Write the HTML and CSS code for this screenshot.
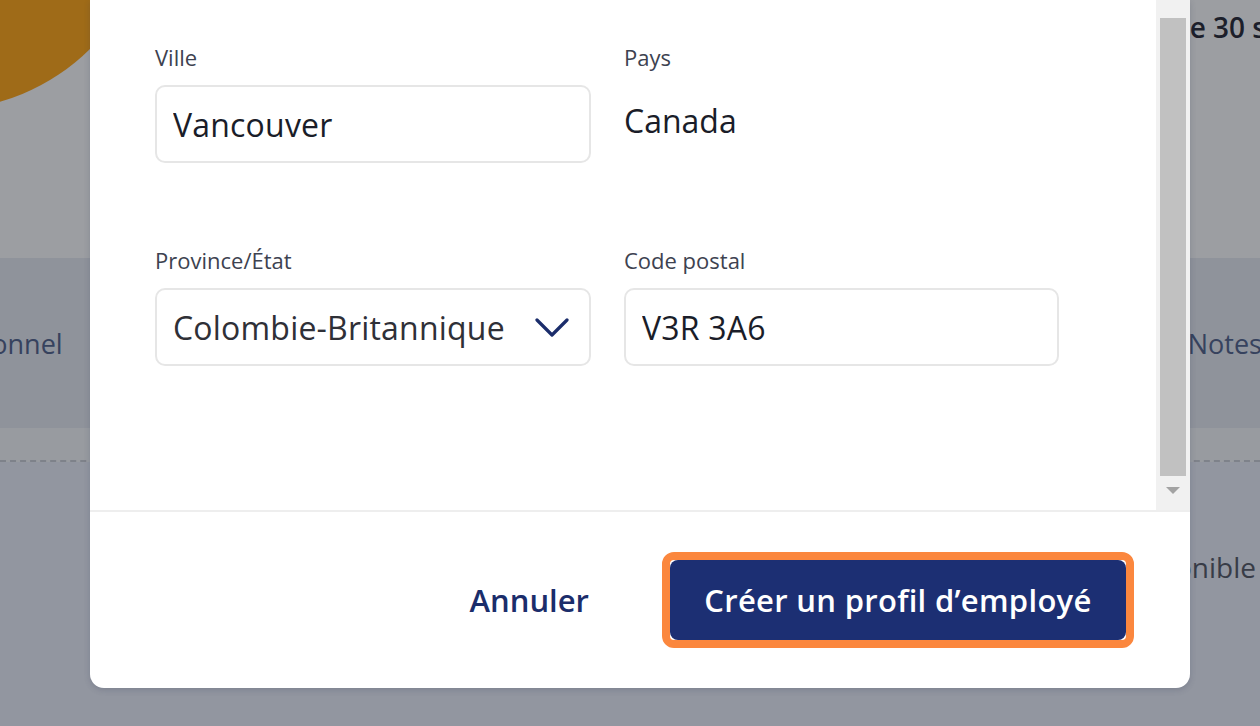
FILE: index.html
```html
<!DOCTYPE html>
<html lang="fr">

<head>
  <meta charset="UTF-8">
  <meta name="viewport" content="width=device-width, initial-scale=1.0">
  <title>Créer un profil d'employé</title>

  <link rel="stylesheet" href="styles.css">
</head>

<body>
  <div id="page">
    <div class="pageHead">
      <div class="avatar"></div>
      <p class="trial">Essai de 30 s</p>
    </div>
    <ul class="tabs">
      <li class="tabFirst">Personnel</li>
      <li class="tabLast">Notes</li>
    </ul>
    <div class="strip"></div>
    <div class="section">
      <p class="status">Disponible</p>
    </div>
  </div>

  <div id="modal">
    <div class="modalBody">
      <form class="fields">
        <div class="field">
          <label for="city">Ville</label>
          <input type="text" id="city" value="Vancouver">
        </div>
        <div class="field">
          <label>Pays</label>
          <div class="staticValue">Canada</div>
        </div>
        <div class="field">
          <label for="province">Province/État</label>
          <div class="select" id="province">
            <span>Colombie-Britannique</span>
            <svg width="34" height="22" viewBox="0 0 34 22">
              <path d="M2 3 L17 18 L32 3" fill="none" stroke="#1b2d6b" stroke-width="3.2" stroke-linecap="round" stroke-linejoin="round"/>
            </svg>
          </div>
        </div>
        <div class="field">
          <label for="postal">Code postal</label>
          <input type="text" id="postal" value="V3R 3A6">
        </div>
      </form>
      <div class="scrollbar">
        <div class="thumb"></div>
        <div class="arrowDown"></div>
      </div>
    </div>
    <div class="modalFoot">
      <button type="button" class="cancel">Annuler</button>
      <span class="focusRing">
        <button type="button" class="create">Créer un profil d’employé</button>
      </span>
    </div>
  </div>
</body>

</html>
```

FILE: styles.css
```css
html, body {
  margin:0;
  height:100%;
  overflow:hidden;
}
body {
  font-family:"Open Sans", "Noto Sans", sans-serif;
  background:#9296a0;
  position:relative;
}
ul, p {
  margin:0;
  padding:0;
  list-style:none;
}

/* page behind the overlay */
.pageHead {
  height:258px;
  background:#9c9ea2;
  display:flex;
  align-items:flex-start;
  justify-content:space-between;
  overflow:hidden;
}
.avatar {
  flex:none;
  width:420px;
  height:420px;
  margin:-310px 0 0 -268px;
  border-radius:50%;
  background:#9f6b18;
}
.trial {
  flex:none;
  margin:8px -6px 0 0;
  white-space:nowrap;
  font-size:28px;
  font-weight:600;
  color:#1c1f2b;
}
.tabs {
  height:170px;
  background:#8f939b;
  display:flex;
  align-items:center;
  justify-content:space-between;
  font-size:27px;
  color:#36425e;
}
.tabFirst {
  margin-left:-64px;
}
.tabLast {
  margin-right:-2px;
}
.strip {
  height:32px;
  background:#989ba0;
  border-bottom:2px dashed #7e828a;
}
.section {
  display:flex;
  justify-content:flex-end;
  padding-top:86px;
}
.status {
  margin-right:4px;
  font-size:28px;
  color:#383c47;
}

/* modal */
#modal {
  position:absolute;
  top:0;
  left:90px;
  width:1100px;
  background:#fff;
  border-radius:0 0 14px 14px;
  box-shadow:0 2px 6px rgba(40, 50, 80, 0.2);
}
.modalBody {
  height:510px;
  display:flex;
  border-bottom:2px solid #eeeeee;
}
.fields {
  flex:1;
  display:grid;
  grid-template-columns:436px 435px;
  column-gap:33px;
  row-gap:82px;
  align-content:start;
  padding:42px 0 0 65px;
}
.field label {
  display:block;
  font-size:22px;
  line-height:30px;
  color:#3d4250;
  margin-bottom:13px;
}
.field input,
.select {
  box-sizing:border-box;
  width:100%;
  height:78px;
  border:2px solid #e6e6e6;
  border-radius:10px;
  padding:0 16px;
  font-family:inherit;
  font-size:32px;
  letter-spacing:0.2px;
  color:#1a1d29;
  outline:none;
}
.select {
  display:flex;
  align-items:center;
  justify-content:space-between;
  padding-right:20px;
  color:#2f3037;
}
.select svg {
  margin-top:2px;
}
.staticValue {
  height:70px;
  display:flex;
  align-items:center;
  font-size:32px;
  color:#1a1d29;
}

.scrollbar {
  width:34px;
  background:#f1f1f1;
  display:flex;
  flex-direction:column;
  align-items:center;
}
.thumb {
  width:26px;
  height:458px;
  margin-top:18px;
  background:#c1c1c1;
}
.arrowDown {
  margin-top:11px;
  width:0;
  height:0;
  border-left:7px solid transparent;
  border-right:7px solid transparent;
  border-top:7px solid #a3a3a3;
}

.modalFoot {
  height:176px;
  display:flex;
  align-items:center;
  justify-content:flex-end;
  padding-right:56px;
}
.cancel {
  border:none;
  background:none;
  padding:0;
  margin-right:73px;
  font-family:inherit;
  font-size:31px;
  font-weight:600;
  color:#1b2d6b;
}
.focusRing {
  display:block;
  border:8px solid #fb873e;
  border-radius:12px;
  background:#fff;
  line-height:0;
}
.create {
  width:456px;
  height:80px;
  border:none;
  border-radius:8px;
  background:#1c2f73;
  font-family:inherit;
  font-size:31px;
  font-weight:600;
  letter-spacing:0.3px;
  color:#fff;
  padding:0;
}
```
